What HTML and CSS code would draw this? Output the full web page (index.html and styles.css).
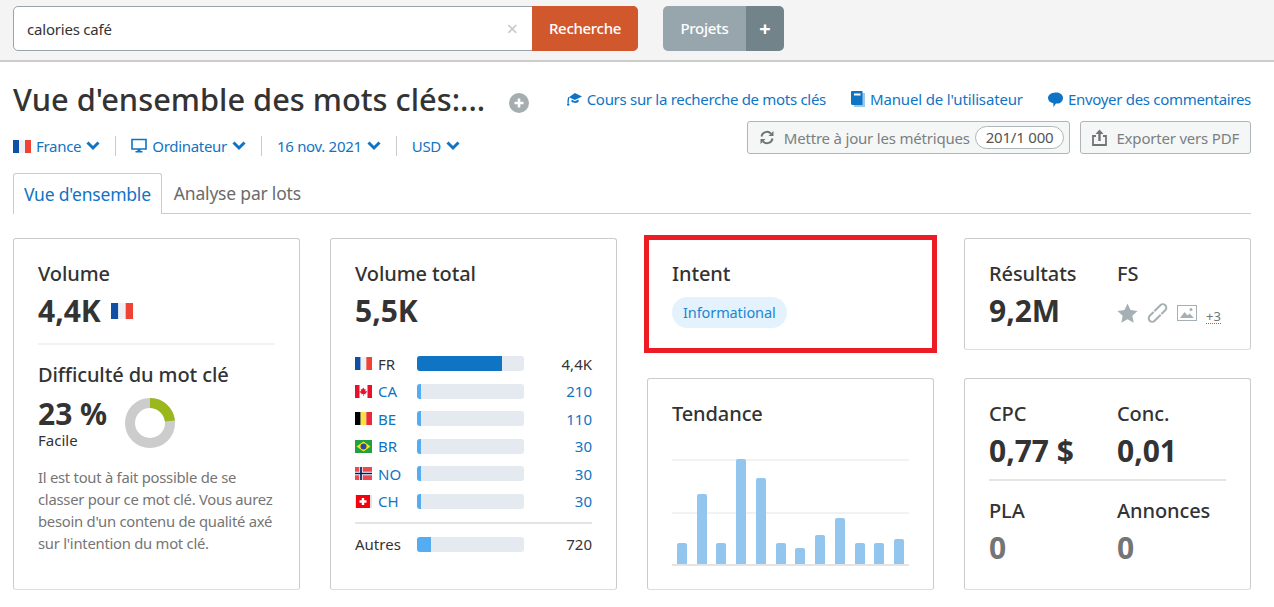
FILE: index.html
```html
<!DOCTYPE html>
<html>

<head>
  <meta charset="UTF-8">
  <link rel="stylesheet" href="styles.css">
</head>

<body>
  <div class="topbar">
    <div class="search">
      <span class="search-text">calories café</span>
      <span class="search-clear">×</span>
      <button class="search-btn">Recherche</button>
    </div>
    <div class="projects">
      <span class="projects-label">Projets</span>
      <span class="projects-add">+</span>
    </div>
  </div>

  <div class="page">
    <div class="head">
      <div class="head-left">
        <div class="title-row">
          <h1>Vue d'ensemble des mots clés:...</h1>
          <svg class="title-plus" width="20" height="20" viewBox="0 0 20 20">
            <circle cx="10" cy="10" r="10" fill="#a4adb0" />
            <path d="M10 5.500v9M5.500 10h9" stroke="#fff" stroke-width="2.600" />
          </svg>
        </div>
        <div class="filters">
          <span class="filter">
            <svg class="flag-lg" viewBox="0 0 3 2" preserveAspectRatio="none">
              <rect width="1" height="2" fill="#0f4fa8" /><rect x="1" width="1" height="2" fill="#eef0f4" /><rect x="2" width="1" height="2" fill="#ef4135" />
            </svg>
            France
            <svg class="chev" viewBox="0 0 14 10"><path d="M1.500 1.500L7 7l5.500-5.500" /></svg>
          </span>
          <span class="filter">
            <svg width="16" height="16" viewBox="0 0 16 16">
              <path d="M1 1.500h14v9.500H1z" fill="none" stroke="#0f74c4" stroke-width="1.600" />
              <path d="M6.500 11h3v2h2v1.500h-7V13h2z" fill="#0f74c4" />
            </svg>
            Ordinateur
            <svg class="chev" viewBox="0 0 14 10"><path d="M1.500 1.500L7 7l5.500-5.500" /></svg>
          </span>
          <span class="filter">
            16 nov. 2021
            <svg class="chev" viewBox="0 0 14 10"><path d="M1.500 1.500L7 7l5.500-5.500" /></svg>
          </span>
          <span class="filter">
            USD
            <svg class="chev" viewBox="0 0 14 10"><path d="M1.500 1.500L7 7l5.500-5.500" /></svg>
          </span>
        </div>
      </div>
      <div class="head-right">
        <div class="links">
          <a class="link">
            <svg width="15" height="15" viewBox="0 0 15 15">
              <path d="M7.800 1L15 4.500 7.800 8 2 5.200z" fill="#0f74c4" />
              <path d="M4.500 7.600l3.300 1.600 3.800-1.800v2.300c-1.800 1.600-5.300 1.600-7.100 0z" fill="#0f74c4" />
              <path d="M1.800 5.200C1.200 7 1.100 9 1.100 11" fill="none" stroke="#0f74c4" stroke-width="1.300" />
              <circle cx="1.200" cy="12.500" r="1.200" fill="#0f74c4" />
            </svg>
            Cours sur la recherche de mots clés
          </a>
          <a class="link link-wide">
            <svg width="14" height="16" viewBox="0 0 14 16">
              <path d="M3 2h11v14H3z" fill="#9cc9ea" />
              <path d="M1 0h10.500v14H1.500a1.500 1.500 0 0 1-1.500-1.500V1a1 1 0 0 1 1-1z" fill="#0f74c4" />
              <path d="M3 2.500h6.500v2H3z" fill="#fff" />
            </svg>
            Manuel de l'utilisateur
          </a>
          <a class="link">
            <svg width="15" height="15" viewBox="0 0 15 15">
              <path d="M7.500 0.500C11.800 0.500 15 2.500 15 6s-3 5.500-5.500 5.500H8L5.500 15l-.2-3.800C2.200 10.600 0 8.700 0 6s3-5.500 7.500-5.500z" fill="#0f74c4" />
            </svg>
            Envoyer des commentaires
          </a>
        </div>
        <div class="actions">
          <button class="action">
            <svg width="16" height="15" viewBox="0 0 16 15" fill="none" stroke="#6f7678" stroke-width="2">
              <path d="M2.500 6.500A5.500 5.500 0 0 1 12 3.700" />
              <path d="M13.500 8.500A5.500 5.500 0 0 1 4 11.300" />
              <path d="M14.500 1v5h-5z" fill="#6f7678" stroke="none" />
              <path d="M1.500 14V9h5z" fill="#6f7678" stroke="none" />
            </svg>
            <span>Mettre à jour les métriques</span>
            <span class="quota">201/1 000</span>
          </button>
          <button class="action">
            <svg width="15" height="17" viewBox="0 0 15 17" fill="none" stroke="#6f7678" stroke-width="1.800">
              <path d="M4 7H1v9h13V7h-3" />
              <path d="M7.500 12V4" stroke-width="2.400" />
              <path d="M3.500 5L7.500 .5 11.500 5z" fill="#6f7678" stroke="none" />
            </svg>
            <span>Exporter vers PDF</span>
          </button>
        </div>
      </div>
    </div>

    <div class="tabs">
      <div class="tab active">Vue d'ensemble</div>
      <div class="tab">Analyse par lots</div>
    </div>

    <div class="cards">
      <div class="card card-tall">
        <h3>Volume</h3>
        <div class="value value-flag">4,4K
          <svg class="flag-value" viewBox="0 0 3 2" preserveAspectRatio="none">
            <rect width="1" height="2" fill="#0f4fa8" /><rect x="1" width="1" height="2" fill="#eef0f4" /><rect x="2" width="1" height="2" fill="#ef4135" />
          </svg>
        </div>
        <div class="divider light"></div>
        <h3 class="kd-title">Difficulté du mot clé</h3>
        <div class="kd">
          <div>
            <div class="value">23 %</div>
            <div class="kd-label">Facile</div>
          </div>
          <svg class="donut" width="50" height="50" viewBox="0 0 50 50">
            <circle cx="25" cy="25" r="20" fill="none" stroke="#cccccc" stroke-width="10" />
            <path d="M25 5A20 20 0 0 1 44.900 23" fill="none" stroke="#9ab71b" stroke-width="10" />
          </svg>
        </div>
        <p class="kd-text">Il est tout à fait possible de se classer pour ce mot clé. Vous aurez besoin d'un contenu de qualité axé sur l'intention du mot clé.</p>
      </div>

      <div class="card card-tall">
        <h3>Volume total</h3>
        <div class="value">5,5K</div>
        <div class="countries">
          <div class="country">
            <svg class="flag" viewBox="0 0 3 2" preserveAspectRatio="none">
              <rect width="1" height="2" fill="#0f4fa8" /><rect x="1" width="1" height="2" fill="#eef0f4" /><rect x="2" width="1" height="2" fill="#ef4135" />
            </svg>
            <span class="code plain">FR</span>
            <div class="bar"><div class="fill dark" style="width: 85px"></div></div>
            <span class="num plain">4,4K</span>
          </div>
          <div class="country">
            <svg class="flag" viewBox="0 0 17 13" preserveAspectRatio="none">
              <rect width="17" height="13" fill="#fff" /><rect width="4.500" height="13" fill="#e8112d" /><rect x="12.500" width="4.500" height="13" fill="#e8112d" />
              <path d="M8.500 2.500l1 2 1.200-.5-.4 2.500 1.400-.6.400 1-1.600 1.400.3 1-2-.3V11h-.6V9l-2 .3.300-1L4.400 6.900l.4-1 1.400.6L5.800 4l1.200.5z" fill="#e8112d" />
            </svg>
            <span class="code">CA</span>
            <div class="bar"><div class="fill" style="width: 4px"></div></div>
            <span class="num">210</span>
          </div>
          <div class="country">
            <svg class="flag" viewBox="0 0 3 2" preserveAspectRatio="none">
              <rect width="1" height="2" fill="#000" /><rect x="1" width="1" height="2" fill="#fae042" /><rect x="2" width="1" height="2" fill="#ed2939" />
            </svg>
            <span class="code">BE</span>
            <div class="bar"><div class="fill" style="width: 4px"></div></div>
            <span class="num">110</span>
          </div>
          <div class="country">
            <svg class="flag" viewBox="0 0 17 13" preserveAspectRatio="none">
              <rect width="17" height="13" fill="#229e45" /><path d="M8.500 1.500L15.500 6.500 8.500 11.500 1.500 6.500z" fill="#f8e509" /><circle cx="8.500" cy="6.500" r="3" fill="#2b49a3" />
            </svg>
            <span class="code">BR</span>
            <div class="bar"><div class="fill" style="width: 4px"></div></div>
            <span class="num">30</span>
          </div>
          <div class="country">
            <svg class="flag" viewBox="0 0 17 13" preserveAspectRatio="none">
              <rect width="17" height="13" fill="#ef4654" /><path d="M6 0v13M0 6.500h17" stroke="#fff" stroke-width="3.400" /><path d="M6 0v13M0 6.500h17" stroke="#00205b" stroke-width="1.700" />
            </svg>
            <span class="code">NO</span>
            <div class="bar"><div class="fill" style="width: 4px"></div></div>
            <span class="num">30</span>
          </div>
          <div class="country">
            <svg class="flag" viewBox="0 0 17 13" preserveAspectRatio="none">
              <rect width="17" height="13" fill="#e8e3e3" /><rect x="1" width="14" height="13" fill="#f5000f" /><path d="M8 3v7M4.500 6.500h7" stroke="#fff" stroke-width="2.400" />
            </svg>
            <span class="code">CH</span>
            <div class="bar"><div class="fill" style="width: 4px"></div></div>
            <span class="num">30</span>
          </div>
        </div>
        <div class="divider others-line"></div>
        <div class="country">
          <span class="others-label">Autres</span>
          <div class="bar"><div class="fill" style="width: 14px"></div></div>
          <span class="num plain">720</span>
        </div>
      </div>

      <div class="card intent">
        <h3>Intent</h3>
        <span class="pill">Informational</span>
      </div>

      <div class="card">
        <div class="split">
          <div>
            <h3>Résultats</h3>
            <div class="value">9,2M</div>
          </div>
          <div>
            <h3>FS</h3>
            <div class="fs-icons">
              <svg width="21" height="20" viewBox="0 0 21 20"><path d="M10.500 0.500l3 6.600 7 .8-5.200 4.800 1.400 7-6.200-3.500-6.200 3.500 1.400-7L.5 7.900l7-.8z" fill="#a4b0b3" /></svg>
              <svg width="21" height="20" viewBox="0 0 21 20" fill="none" stroke="#a4b0b3" stroke-width="2">
                <g transform="rotate(-45 10.500 10)">
                  <path d="M9.500 6.500h8.500a3.500 3.500 0 0 1 0 7h-5.500" />
                  <path d="M11.500 13.500H3a3.500 3.500 0 0 1 0-7h5.500" />
                </g>
              </svg>
              <svg width="20" height="16" viewBox="0 0 20 16">
                <rect x=".5" y=".5" width="19" height="15" fill="none" stroke="#a4b0b3" />
                <path d="M3 13l4.500-6 3 3.500 2-2L17 13z" fill="#a4b0b3" /><circle cx="14" cy="4.500" r="1.500" fill="#a4b0b3" />
              </svg>
              <span class="fs-more">+3</span>
            </div>
          </div>
        </div>
      </div>

      <div class="card">
        <h3>Tendance</h3>
        <div class="trend">
          <div class="trend-line"></div>
          <div class="trend-line"></div>
          <div class="trend-bars">
            <div class="trend-bar" style="height: 21px"></div>
            <div class="trend-bar" style="height: 70px"></div>
            <div class="trend-bar" style="height: 21px"></div>
            <div class="trend-bar" style="height: 105px"></div>
            <div class="trend-bar" style="height: 86px"></div>
            <div class="trend-bar" style="height: 21px"></div>
            <div class="trend-bar" style="height: 16px"></div>
            <div class="trend-bar" style="height: 29px"></div>
            <div class="trend-bar" style="height: 46px"></div>
            <div class="trend-bar" style="height: 21px"></div>
            <div class="trend-bar" style="height: 21px"></div>
            <div class="trend-bar" style="height: 25px"></div>
          </div>
        </div>
      </div>

      <div class="card">
        <div class="split">
          <div>
            <h3>CPC</h3>
            <div class="value">0,77 $</div>
          </div>
          <div>
            <h3>Conc.</h3>
            <div class="value">0,01</div>
          </div>
        </div>
        <div class="divider ads-line"></div>
        <div class="split">
          <div>
            <h3>PLA</h3>
            <div class="value muted">0</div>
          </div>
          <div>
            <h3>Annonces</h3>
            <div class="value muted">0</div>
          </div>
        </div>
      </div>
    </div>
  </div>
</body>

</html>
```

FILE: styles.css
```css
* {
  margin: 0;
  padding: 0;
  box-sizing: border-box;
}

html,
body {
  height: 100%;
  overflow: hidden;
}

body {
  background: #fff;
  color: #333;
  font-family: 'Noto Sans', sans-serif;
}

.topbar {
  display: flex;
  gap: 25px;
  height: 62px;
  padding: 6px 13px 0;
  background: #f4f4f4;
  border-bottom: 2px solid #ccc;
}

.search {
  display: flex;
  align-items: center;
  width: 625px;
  height: 45px;
  background: #fff;
  border: 1px solid #96a5ab;
  border-radius: 5px;
}

.search-text {
  flex: 1;
  padding-left: 13px;
  font-size: 15px;
  letter-spacing: -0.2px;
}

.search-clear {
  margin-right: 15px;
  color: #c4c8ca;
  font-size: 20px;
}

.search-btn {
  width: 106px;
  height: 45px;
  margin: -1px;
  padding-bottom: 2px;
  border: none;
  border-radius: 0 5px 5px 0;
  background: #d1582d;
  color: #fff;
  font-family: inherit;
  font-size: 15px;
  font-weight: 500;
  letter-spacing: -0.3px;
}

.projects {
  display: flex;
  height: 45px;
  border-radius: 5px;
  overflow: hidden;
  color: #fff;
}

.projects-label {
  display: flex;
  align-items: center;
  justify-content: center;
  width: 83px;
  padding-bottom: 2px;
  background: #96a6ac;
  font-size: 15px;
  font-weight: 500;
  letter-spacing: -0.3px;
}

.projects-add {
  display: flex;
  align-items: center;
  justify-content: center;
  width: 38px;
  background: #728389;
  font-size: 20px;
  font-weight: 700;
}

.page {
  width: 1238px;
  margin-left: 13px;
}

.head {
  display: flex;
  justify-content: space-between;
}

.title-row {
  display: flex;
  align-items: center;
  gap: 24px;
  padding-top: 18px;
}

h1 {
  font-size: 30.800px;
  font-weight: 500;
  line-height: 38px;
  white-space: nowrap;
}

.title-plus {
  margin-top: 8px;
}

.filters {
  display: flex;
  align-items: center;
  margin-top: 18px;
  color: #0f74c4;
  font-size: 15px;
  letter-spacing: -0.3px;
}

.filter {
  display: flex;
  align-items: center;
  gap: 5px;
  height: 20px;
  padding: 0 15px;
  border-left: 1px solid #ccc;
}

.filter:first-child {
  padding-left: 0;
  border-left: none;
}

.flag-lg {
  width: 18px;
  height: 13px;
}

.chev {
  width: 14px;
  height: 10px;
  fill: none;
  stroke: #0f74c4;
  stroke-width: 3;
}

.head-right {
  display: flex;
  flex-direction: column;
  align-items: flex-end;
  padding-top: 27px;
}

.links {
  display: flex;
  gap: 25px;
}

.link {
  display: flex;
  align-items: center;
  gap: 5px;
  color: #0f74c4;
  font-size: 15px;
  letter-spacing: -0.3px;
  line-height: 20px;
}

.link-wide {
  letter-spacing: -0.15px;
}

.actions {
  display: flex;
  gap: 10px;
  margin-top: 12px;
}

.action {
  display: flex;
  align-items: center;
  gap: 9px;
  height: 33px;
  padding: 0 11px;
  border: 1px solid #aeb6b9;
  border-radius: 3px;
  background: #f5f7f7;
  color: #7b7f81;
  font-family: inherit;
  font-size: 15px;
  letter-spacing: -0.2px;
}

.quota {
  margin-left: -4px;
  margin-right: -6px;
  padding: 0 10px;
  border: 1px solid #aeb6b9;
  border-radius: 12px;
  background: #fff;
  color: #555;
  line-height: 21px;
}

.tabs {
  display: flex;
  height: 41px;
  margin-top: 17px;
  border-bottom: 1px solid #ccc;
}

.tab {
  display: flex;
  align-items: center;
  padding: 0 12px;
  color: #6b6b6b;
  font-size: 17.500px;
  letter-spacing: -0.2px;
}

.tab.active {
  height: 41px;
  padding: 0 10px;
  background: #fff;
  border: 1px solid #ccc;
  border-bottom: none;
  border-radius: 3px 3px 0 0;
  color: #0f74c4;
}

.cards {
  display: grid;
  grid-template-columns: repeat(4, 287px);
  grid-template-rows: 112px 212px;
  column-gap: 30px;
  row-gap: 28px;
  margin-top: 24px;
}

.card {
  padding: 24px;
  background: #fff;
  border: 1px solid #ccc;
  border-bottom-color: #ddd;
  border-radius: 3px;
}

.card-tall {
  grid-row: span 2;
}

h3 {
  font-size: 20px;
  font-weight: 500;
  line-height: 22px;
  letter-spacing: -0.1px;
}

.value {
  margin-top: 8px;
  font-size: 30px;
  font-weight: 700;
  line-height: 36px;
}

.value.muted {
  color: #757575;
}

.value-flag {
  display: flex;
  align-items: center;
  gap: 10px;
}

.flag-value {
  width: 22px;
  height: 16px;
}

.divider {
  height: 2px;
  background: #e4e4e4;
}

.divider.light {
  margin-top: 14px;
  background: #f2f2f2;
}

.kd-title {
  margin-top: 19px;
}

.kd {
  display: flex;
  align-items: center;
  gap: 18px;
}

.kd .value {
  margin-top: 12px;
  line-height: 32px;
}

.kd-label {
  font-size: 15px;
  line-height: 20px;
}

.donut {
  margin-top: 9px;
}

.kd-text {
  margin-top: 16px;
  margin-right: -3px;
  color: #757575;
  font-size: 14.800px;
  line-height: 22px;
  letter-spacing: -0.25px;
}

.countries {
  display: flex;
  flex-direction: column;
  gap: 12.600px;
  margin-top: 27px;
}

.country {
  display: flex;
  align-items: center;
  height: 15px;
  font-size: 15px;
}

.flag {
  flex: none;
  width: 17px;
  height: 13px;
  margin-right: 6px;
}

.code {
  width: 39px;
  color: #0f74c4;
}

.code.plain,
.num.plain {
  color: #333;
}

.others-label {
  width: 62px;
}

.bar {
  width: 107px;
  height: 15px;
  background: #e4eaf0;
  border-radius: 3px;
  overflow: hidden;
}

.fill {
  height: 15px;
  background: #54adf2;
}

.fill.dark {
  background: #0f74c4;
}

.num {
  flex: 1;
  color: #0f74c4;
  text-align: right;
}

.others-line {
  margin: 13px 0 13px;
}

.intent {
  border-radius: 0;
  outline: 5px solid #ed1c24;
  outline-offset: -2px;
}

.pill {
  display: inline-block;
  margin-top: 12px;
  padding: 0 11px;
  background: #e3f2fc;
  border-radius: 16px;
  color: #1c86d1;
  font-size: 14.500px;
  line-height: 31px;
  letter-spacing: -0.1px;
}

.split {
  display: grid;
  grid-template-columns: 128px 1fr;
}

.fs-icons {
  display: flex;
  align-items: center;
  gap: 9px;
  height: 36px;
  margin-top: 10px;
}

.fs-more {
  margin-top: 8px;
  border-bottom: 1px dotted #757575;
  color: #757575;
  font-size: 13px;
  line-height: 13px;
}

.trend {
  position: relative;
  display: flex;
  flex-direction: column;
  justify-content: space-between;
  height: 107px;
  margin-top: 34px;
  border-bottom: 2px solid #e4e4e4;
}

.trend-line {
  height: 2px;
  margin-bottom: 50px;
  background: #f2f2f2;
}

.trend-bars {
  position: absolute;
  left: 0;
  right: 0;
  bottom: 0;
  display: flex;
  align-items: flex-end;
  justify-content: space-around;
}

.trend-bar {
  width: 10px;
  background: #93c6ef;
  border-radius: 2px 2px 0 0;
}

.ads-line {
  margin-top: 10px;
  margin-bottom: 19px;
}
```
